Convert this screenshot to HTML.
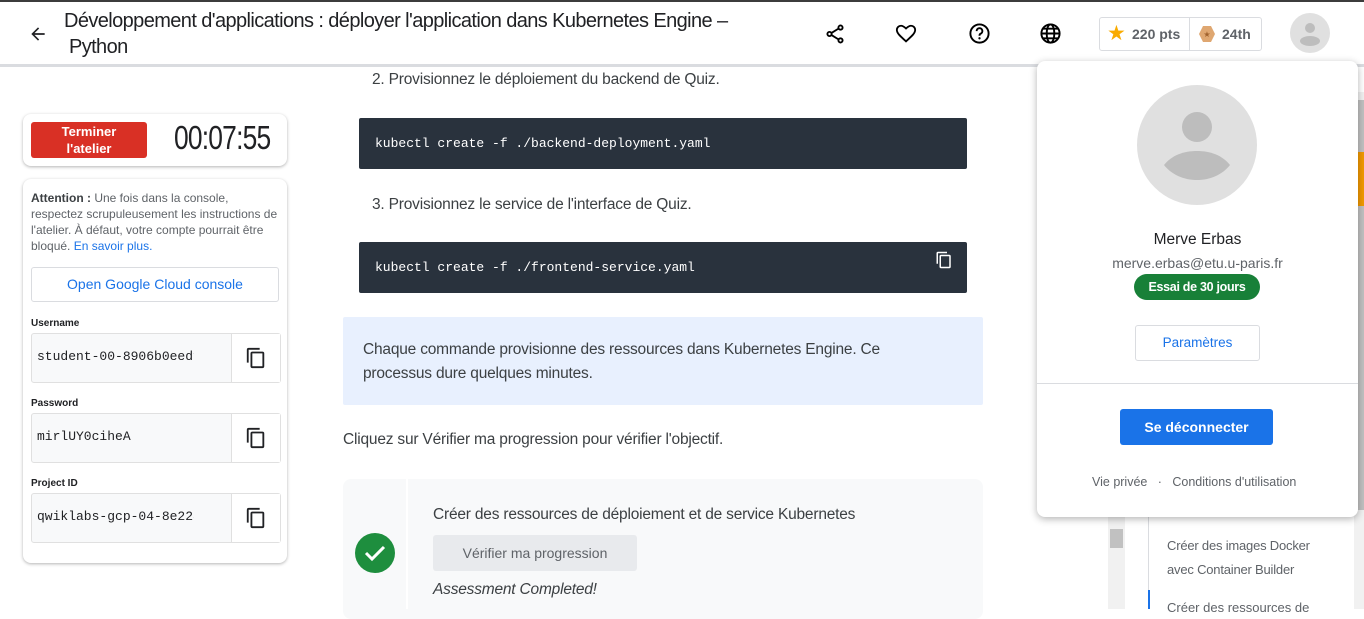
<!DOCTYPE html>
<html><head><meta charset="utf-8"><style>
*{box-sizing:border-box;margin:0;padding:0}
body{width:1364px;height:609px;overflow:hidden;background:#fff;font-family:"Liberation Sans",sans-serif;position:relative;color:#202124}
.a{position:absolute}
.code{position:absolute;left:359px;width:608px;background:#29323d;border-radius:2px;color:#fff;font-size:13px;font-family:"Liberation Mono",monospace;padding-left:16px}
.card{position:absolute;background:#fff;border-radius:8px;box-shadow:0 1px 3px rgba(0,0,0,.3)}
.lbl{position:absolute;left:31px;font-size:10px;font-weight:bold;color:#202124}
.fld{position:absolute;left:31px;width:250px;height:50px;border:1px solid #e0e0e0;border-radius:3px;background:#f8f9fa}
.fld span{position:absolute;left:5px;top:15px;font-size:13px;width:157px;overflow:hidden;white-space:nowrap;font-family:"Liberation Mono",monospace}
.fld i{position:absolute;right:0;top:0;width:49px;height:48px;background:#fff;border-left:1px solid #e0e0e0}
</style></head><body>
<div class="a" style="left:0;top:0;width:1364px;height:2px;background:#3c3c3c"></div>
<div class="a" style="left:0;top:64px;width:1364px;height:3px;background:#dadce0"></div>
<svg class="a" style="left:28px;top:24px" width="20" height="20" viewBox="0 0 24 24"><path d="M20 11H7.8l5.6-5.6L12 4l-8 8 8 8 1.4-1.4L7.8 13H20z" fill="#202124"/></svg>
<div class="a" style="left:64px;top:8px;font-size:20px;line-height:26px;letter-spacing:-0.6px;color:#202124;width:740px">Développement d'applications : déployer l'application dans Kubernetes Engine –<br>&nbsp;Python</div>
<svg class="a" style="left:824px;top:23px" width="22" height="22" viewBox="0 0 24 24"><circle cx="18" cy="5" r="2.3" fill="none" stroke="#000" stroke-width="2"/><circle cx="6" cy="12" r="2.3" fill="none" stroke="#000" stroke-width="2"/><circle cx="18" cy="19" r="2.3" fill="none" stroke="#000" stroke-width="2"/><path d="M8 11l8-5M8 13l8 5" stroke="#000" stroke-width="2"/></svg>
<svg class="a" style="left:895px;top:23px" width="22" height="22" viewBox="0 0 24 24"><path d="M12 20l-1.4-1.3C5.4 14 2 11 2 7.5 2 4.9 4.1 3 6.5 3c1.5 0 3 .7 5.5 3 2.5-2.3 4-3 5.5-3C19.9 3 22 4.9 22 7.5c0 3.5-3.4 6.5-8.6 11.2z" fill="none" stroke="#000" stroke-width="2"/></svg>
<svg class="a" style="left:968px;top:22px" width="23" height="23" viewBox="0 0 24 24"><circle cx="12" cy="12" r="9.5" fill="none" stroke="#000" stroke-width="2"/><path d="M9 9.5a3 3 0 1 1 4 2.8c-.8.4-1 1-1 2" fill="none" stroke="#000" stroke-width="2"/><circle cx="12" cy="17" r="1.2"/></svg>
<svg class="a" style="left:1039px;top:22px" width="23" height="23" viewBox="0 0 24 24" fill="none" stroke="#000" stroke-width="2"><circle cx="12" cy="12" r="9.5"/><ellipse cx="12" cy="12" rx="4" ry="9.5"/><path d="M2.5 12h19M4 7h16M4 17h16"/></svg>
<div class="a" style="left:1099px;top:17px;width:163px;height:34px;border:1px solid #dadce0;border-radius:3px"></div>
<div class="a" style="left:1189px;top:17px;width:1px;height:34px;background:#dadce0"></div>
<div class="a" style="left:1107px;top:21px;color:#f9ab00;font-size:21px">★</div>
<div class="a" style="left:1132px;top:26px;font-size:14px;font-weight:bold;color:#5f6368">220 pts</div>
<svg class="a" style="left:1198px;top:25px" width="18" height="18" viewBox="0 0 18 18"><path d="M5 1h8l4 8-4 8H5L1 9z" fill="#dfa771"/><text x="9" y="12" font-size="8" text-anchor="middle" fill="#a0622d">★</text></svg>
<div class="a" style="left:1222px;top:26px;font-size:14px;font-weight:bold;color:#5f6368">24th</div>
<svg class="a" style="left:1290px;top:13px" width="40" height="40" viewBox="0 0 40 40"><circle cx="20" cy="20" r="20" fill="#e0e0e0"/><circle cx="20" cy="15" r="5" fill="#bdbdbd"/><ellipse cx="20" cy="28" rx="10" ry="5" fill="#bdbdbd"/></svg>

<div class="card" style="left:23px;top:114px;width:264px;height:52px"></div>
<div class="a" style="left:31px;top:122px;width:116px;height:36px;background:#d93025;border-radius:3px;color:#fff;font-weight:bold;font-size:13px;text-align:center;line-height:17px;padding-top:1px">Terminer<br>l'atelier</div>
<div class="a" style="left:174px;top:119px;font-size:33px;color:#202124;letter-spacing:-1px;transform:scaleX(.8);transform-origin:left">00:07:55</div>

<div class="card" style="left:23px;top:179px;width:264px;height:384px"></div>
<div class="a" style="left:31px;top:190px;width:250px;font-size:12px;line-height:16px;color:#5f6368;letter-spacing:0"><b style="color:#3c4043">Attention :</b> Une fois dans la console, respectez scrupuleusement les instructions de l'atelier. À défaut, votre compte pourrait être bloqué. <span style="color:#1a73e8">En savoir plus.</span></div>
<div class="a" style="left:31px;top:267px;width:248px;height:35px;border:1px solid #dadce0;border-radius:3px;color:#1a73e8;font-size:14px;text-align:center;line-height:33px">Open Google Cloud console</div>
<div class="lbl" style="top:318px">Username</div>
<div class="fld" style="top:333px"><span>student-00-8906b0eedfbc</span><i></i></div>
<div class="lbl" style="top:398px">Password</div>
<div class="fld" style="top:413px"><span>mirlUY0ciheA</span><i></i></div>
<div class="lbl" style="top:478px">Project ID</div>
<div class="fld" style="top:493px"><span>qwiklabs-gcp-04-8e22386</span><i></i></div>
<svg class="a" style="left:245px;top:347px" width="22" height="22" viewBox="0 0 24 24"><path d="M16 1H4a2 2 0 0 0-2 2v14h2V3h12zm3 4H8a2 2 0 0 0-2 2v14a2 2 0 0 0 2 2h11a2 2 0 0 0 2-2V7a2 2 0 0 0-2-2zm0 16H8V7h11z" fill="#202124"/></svg>
<svg class="a" style="left:245px;top:427px" width="22" height="22" viewBox="0 0 24 24"><path d="M16 1H4a2 2 0 0 0-2 2v14h2V3h12zm3 4H8a2 2 0 0 0-2 2v14a2 2 0 0 0 2 2h11a2 2 0 0 0 2-2V7a2 2 0 0 0-2-2zm0 16H8V7h11z" fill="#202124"/></svg>
<svg class="a" style="left:245px;top:507px" width="22" height="22" viewBox="0 0 24 24"><path d="M16 1H4a2 2 0 0 0-2 2v14h2V3h12zm3 4H8a2 2 0 0 0-2 2v14a2 2 0 0 0 2 2h11a2 2 0 0 0 2-2V7a2 2 0 0 0-2-2zm0 16H8V7h11z" fill="#202124"/></svg>

<div class="a" style="left:372px;top:71px;font-size:15.5px;letter-spacing:-0.2px;color:#3c4043">2. Provisionnez le déploiement du backend de Quiz.</div>
<div class="code" style="top:118px;height:51px;line-height:51px">kubectl create -f ./backend-deployment.yaml</div>
<div class="a" style="left:372px;top:196px;font-size:15.5px;letter-spacing:-0.2px;color:#3c4043">3. Provisionnez le service de l'interface de Quiz.</div>
<div class="code" style="top:242px;height:51px;line-height:51px">kubectl create -f ./frontend-service.yaml</div>
<svg class="a" style="left:935px;top:251px" width="18" height="18" viewBox="0 0 24 24"><path d="M16 1H4a2 2 0 0 0-2 2v14h2V3h12zm3 4H8a2 2 0 0 0-2 2v14a2 2 0 0 0 2 2h11a2 2 0 0 0 2-2V7a2 2 0 0 0-2-2zm0 16H8V7h11z" fill="#fff"/></svg>
<div class="a" style="left:343px;top:317px;width:640px;height:88px;background:#e8f0fe;border-radius:2px"></div>
<div class="a" style="left:363px;top:338px;width:560px;font-size:15.5px;line-height:24px;letter-spacing:-0.2px;color:#3c4043">Chaque commande provisionne des ressources dans Kubernetes Engine. Ce processus dure quelques minutes.</div>
<div class="a" style="left:343px;top:431px;font-size:15.5px;letter-spacing:-0.2px;color:#3c4043">Cliquez sur Vérifier ma progression pour vérifier l'objectif.</div>
<div class="a" style="left:343px;top:479px;width:640px;height:140px;background:#f8f9fa;border-radius:8px"></div>
<div class="a" style="left:406px;top:479px;width:2px;height:130px;background:#fff"></div>
<svg class="a" style="left:355px;top:533px" width="40" height="40" viewBox="0 0 40 40"><circle cx="20" cy="20" r="20" fill="#1e8e3e"/><path d="M11 20l6 6 12-12" fill="none" stroke="#fff" stroke-width="3"/></svg>
<div class="a" style="left:433px;top:506px;font-size:15.5px;letter-spacing:-0.2px;color:#3c4043">Créer des ressources de déploiement et de service Kubernetes</div>
<div class="a" style="left:433px;top:535px;width:204px;height:36px;background:#e8eaed;border-radius:3px;color:#5f6368;font-size:14px;text-align:center;line-height:36px">Vérifier ma progression</div>
<div class="a" style="left:433px;top:581px;font-size:15.5px;font-style:italic;letter-spacing:-0.2px;color:#3c4043">Assessment Completed!</div>

<div class="a" style="left:1354px;top:92px;width:10px;height:517px;background:#f1f1f1"></div>
<div class="a" style="left:1356px;top:100px;width:8px;height:410px;background:#c1c1c1"></div>
<div class="a" style="left:1356px;top:152px;width:8px;height:54px;background:#f29900"></div>
<div class="a" style="left:1108px;top:500px;width:17px;height:109px;background:#f1f1f1"></div>
<div class="a" style="left:1110px;top:529px;width:13px;height:19px;background:#c1c1c1"></div>
<div class="a" style="left:1125px;top:500px;width:225px;height:109px;background:#fff"></div>
<div class="a" style="left:1148px;top:500px;width:1px;height:109px;background:#dadce0"></div>
<div class="a" style="left:1148px;top:590px;width:2px;height:19px;background:#1a73e8"></div>
<div class="a" style="left:1167px;top:534px;font-size:13px;line-height:24px;color:#5f6368;letter-spacing:-0.2px">Créer des images Docker<br>avec Container Builder</div>
<div class="a" style="left:1167px;top:600px;font-size:13px;color:#5f6368">Créer des ressources de</div>

<div class="a" style="left:1037px;top:61px;width:321px;height:456px;background:#fff;border-radius:8px;box-shadow:0 2px 8px rgba(0,0,0,.3)"></div>
<svg class="a" style="left:1137px;top:85px" width="120" height="120" viewBox="0 0 120 120"><circle cx="60" cy="60" r="60" fill="#e0e0e0"/><circle cx="60" cy="42" r="15" fill="#bdbdbd"/><path d="M27 80c8-10 20-14 33-14s25 4 33 14c-8 10-20 15-33 15S35 90 27 80z" fill="#bdbdbd"/></svg>
<div class="a" style="left:1037px;top:231px;width:321px;text-align:center;font-size:15.5px;color:#202124">Merve Erbas</div>
<div class="a" style="left:1037px;top:255px;width:321px;text-align:center;font-size:14px;color:#5f6368">merve.erbas@etu.u-paris.fr</div>
<div class="a" style="left:1134px;top:274px;width:126px;height:26px;background:#188038;border-radius:13px;color:#fff;font-weight:bold;font-size:12.5px;text-align:center;line-height:26px;letter-spacing:-0.3px">Essai de 30 jours</div>
<div class="a" style="left:1135px;top:325px;width:125px;height:36px;border:1px solid #dadce0;border-radius:3px;color:#1a73e8;font-size:13.5px;text-align:center;line-height:34px">Paramètres</div>
<div class="a" style="left:1037px;top:383px;width:321px;height:1px;background:#dadce0"></div>
<div class="a" style="left:1120px;top:409px;width:153px;height:36px;background:#1a73e8;border-radius:3px;color:#fff;font-weight:bold;font-size:14px;text-align:center;line-height:36px">Se déconnecter</div>
<div class="a" style="left:1092px;top:475px;font-size:12.5px;color:#5f6368;white-space:nowrap">Vie privée &nbsp;&nbsp;·&nbsp;&nbsp; Conditions d'utilisation</div>
</body></html>
